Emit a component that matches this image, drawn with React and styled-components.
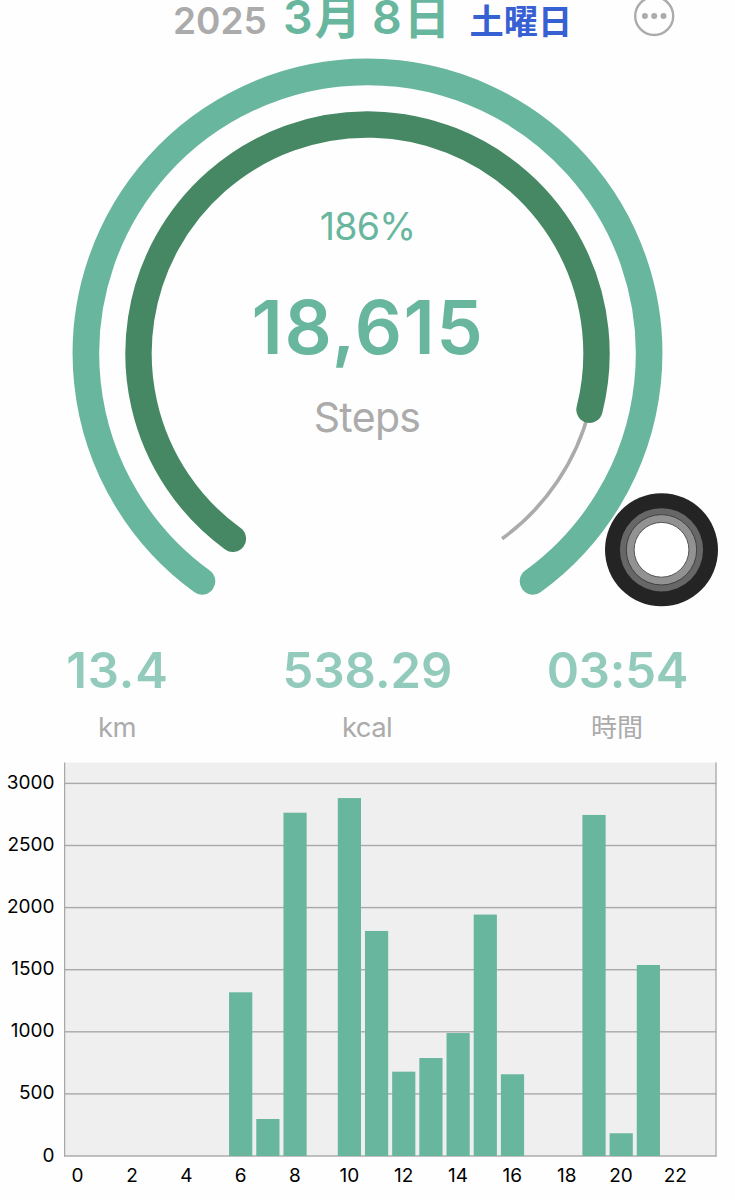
import styled, { createGlobalStyle } from "styled-components";

const colors = {
  mint: "#69b69e",
  mintLight: "#92cbbb",
  forest: "#468864",
  gray: "#ababab",
  blue: "#3760d2",
  plot: "#efefef",
  line: "#a9a9a9",
};

const GlobalStyle = createGlobalStyle`
  * {
    box-sizing: border-box;
  }
  body {
    margin: 0;
    background: #fff;
    overflow: hidden;
    font-family: Inter, "Noto Sans CJK JP", sans-serif;
  }
`;

const Screen = styled.main`
  position: relative;
  display: flex;
  flex-direction: column;
  width: 735px;
  height: 1200px;
  overflow: hidden;
  background: #fefefe;
`;

const Header = styled.header`
  display: flex;
  align-items: baseline;
  height: 50px;
  padding-left: 173px;
  line-height: 35px;
  white-space: nowrap;
`;

const DatePart = styled.span`
  width: ${(p) => p.$width}px;
  font-size: ${(p) => p.$size}px;
  font-weight: 600;
  letter-spacing: ${(p) => p.$spacing || 0}px;
  color: ${(p) => p.$color};
`;

const MenuButton = styled.button`
  align-self: flex-start;
  width: 42px;
  height: 42px;
  margin: -5px 0 0 52px;
  padding: 0;
  border: 0;
  background: none;

  svg {
    display: block;
  }
`;

const Gauge = styled.section`
  display: grid;
  height: 575px;

  > * {
    grid-area: 1 / 1;
  }
`;

const GaugeText = styled.div`
  display: flex;
  flex-direction: column;
  align-items: center;
  padding-top: 150px;
  white-space: nowrap;
`;

const Percent = styled.div`
  font-size: 37.5px;
  line-height: 53px;
  letter-spacing: -0.8px;
  color: ${colors.mint};
`;

const StepCount = styled.div`
  margin-top: 24px;
  padding-left: 1px;
  font-size: 74px;
  font-weight: 600;
  line-height: 100px;
  letter-spacing: 1.5px;
  color: ${colors.mint};
`;

const StepLabel = styled.div`
  margin-top: 15px;
  padding-right: 1px;
  font-size: 41px;
  line-height: 50px;
  letter-spacing: -0.7px;
  color: ${colors.gray};
`;

const Stats = styled.section`
  display: grid;
  grid-template-columns: repeat(3, 250px);
  justify-content: center;
  height: 137px;
  padding-top: 15px;
`;

const Stat = styled.div`
  display: flex;
  flex-direction: column;
  align-items: center;
`;

const StatValue = styled.div`
  font-size: 49px;
  font-weight: 600;
  line-height: 61px;
  letter-spacing: ${(p) => p.$spacing}px;
  color: ${colors.mintLight};
`;

const StatUnit = styled.div`
  margin-top: 6px;
  padding-right: 1px;
  font-size: ${(p) => p.$size || 27.5}px;
  font-weight: 400;
  line-height: 41px;
  letter-spacing: ${(p) => (p.$size ? 0 : -0.6)}px;
  color: ${colors.gray};
`;

const Chart = styled.section`
  display: grid;
  grid-template-columns: 64px 653px;
  grid-template-rows: 395px 40px;
`;

const YAxis = styled.div`
  display: flex;
  flex-direction: column;
  align-items: flex-end;
  height: 435px;
  margin-top: -10px;
  padding-right: 9.5px;
`;

const YLabel = styled.span`
  flex: 0 0 62.1px;
  font-size: 19px;
  line-height: 62px;
`;

const XAxis = styled.div`
  grid-column: 2;
  display: grid;
  grid-template-columns: repeat(24, 27.18px);
  justify-items: center;
`;

const XLabel = styled.span`
  font-size: 19px;
  line-height: 38px;
`;

const AssistiveTouch = styled.svg`
  position: absolute;
  left: 604px;
  top: 492px;
`;

const stats = [
  { value: "13.4", unit: "km", spacing: 0.8 },
  { value: "538.29", unit: "kcal", spacing: 0 },
  { value: "03:54", unit: "時間", spacing: -0.2, size: 26 },
];

// steps walked in each hour of the day
const hourly = [
  0, 0, 0, 0, 0, 0, 1318, 298, 2764, 0, 2882, 1812, 679, 789, 990, 1944, 658, 0,
  0, 2746, 183, 1538, 0, 0,
];

const ticks = [3000, 2500, 2000, 1500, 1000, 500, 0];

const CX = 367.5;
const CY = 303.5;

// angles run clockwise from 3 o'clock
function arc(r, from, to) {
  const point = (deg) => {
    const a = (deg * Math.PI) / 180;
    return `${CX + r * Math.cos(a)} ${CY + r * Math.sin(a)}`;
  };
  const large = to - from > 180 ? 1 : 0;
  return `M ${point(from)} A ${r} ${r} 0 ${large} 1 ${point(to)}`;
}

function Rings() {
  return (
    <svg width="735" height="575" fill="none">
      <path d={arc(281.6, 126, 414)} stroke={colors.mint} strokeWidth="26.6" strokeLinecap="round" />
      <path d={arc(229, 374, 414)} stroke={colors.gray} strokeWidth="3.6" />
      <path d={arc(229, 126, 374.2)} stroke={colors.forest} strokeWidth="26.4" strokeLinecap="round" />
    </svg>
  );
}

function Plot() {
  const base = 394;
  const column = 27.18;
  const toY = (steps) => base - (steps * 62.1) / 500;
  return (
    <svg width="653" height="395">
      <rect x="0" y="0.5" width="652.5" height="394" fill={colors.plot} />
      {ticks.map((t) => (
        <rect key={t} x="0" y={toY(t) - 0.7} width="652.5" height="1.4" fill={colors.line} />
      ))}
      {hourly.map((steps, hour) =>
        steps ? (
          <rect
            key={hour}
            x={hour * column + 2}
            y={toY(steps)}
            width="23.2"
            height={base - toY(steps)}
            fill={colors.mint}
          />
        ) : null
      )}
      <path d="M0.6 0.5V394.6M652 0.5V394.6" stroke={colors.line} strokeWidth="1.3" />
    </svg>
  );
}

export default function App() {
  return (
    <>
      <GlobalStyle />
      <Screen>
        <Header>
          <DatePart $width={110} $size={37} $color={colors.gray}>2025</DatePart>
          <DatePart $width={89} $size={46.5} $spacing={2} $color={colors.mint}>3月</DatePart>
          <DatePart $width={97.5} $size={46.5} $spacing={2} $color={colors.mint}>8日</DatePart>
          <DatePart $width={112.5} $size={34.2} $color={colors.blue}>土曜日</DatePart>
          <MenuButton aria-label="menu">
            <svg width="42" height="42" fill={colors.gray}>
              <circle cx="20.2" cy="21" r="19" fill="none" stroke={colors.gray} strokeWidth="2.4" />
              <circle cx="10.9" cy="21" r="3" />
              <circle cx="20.2" cy="21" r="3" />
              <circle cx="29.5" cy="21" r="3" />
            </svg>
          </MenuButton>
        </Header>

        <Gauge>
          <Rings />
          <GaugeText>
            <Percent>186%</Percent>
            <StepCount>18,615</StepCount>
            <StepLabel>Steps</StepLabel>
          </GaugeText>
        </Gauge>

        <Stats>
          {stats.map((s) => (
            <Stat key={s.unit}>
              <StatValue $spacing={s.spacing}>{s.value}</StatValue>
              <StatUnit $size={s.size}>{s.unit}</StatUnit>
            </Stat>
          ))}
        </Stats>

        <Chart>
          <YAxis>
            {ticks.map((t) => (
              <YLabel key={t}>{t}</YLabel>
            ))}
          </YAxis>
          <Plot />
          <XAxis>
            {hourly.map((_, hour) => (
              <XLabel key={hour}>{hour % 2 === 0 ? hour : ""}</XLabel>
            ))}
          </XAxis>
        </Chart>

        <AssistiveTouch width="115" height="115">
          <circle cx="57.5" cy="57.8" r="56.5" fill="#242424" />
          <circle cx="57.5" cy="57.8" r="41.6" fill="#676767" />
          <circle cx="57.5" cy="57.8" r="35.2" fill="#929292" stroke="#404040" strokeWidth="1" />
          <circle cx="57.5" cy="57.8" r="27.4" fill="#fff" stroke="#555" strokeWidth="1" />
        </AssistiveTouch>
      </Screen>
    </>
  );
}
